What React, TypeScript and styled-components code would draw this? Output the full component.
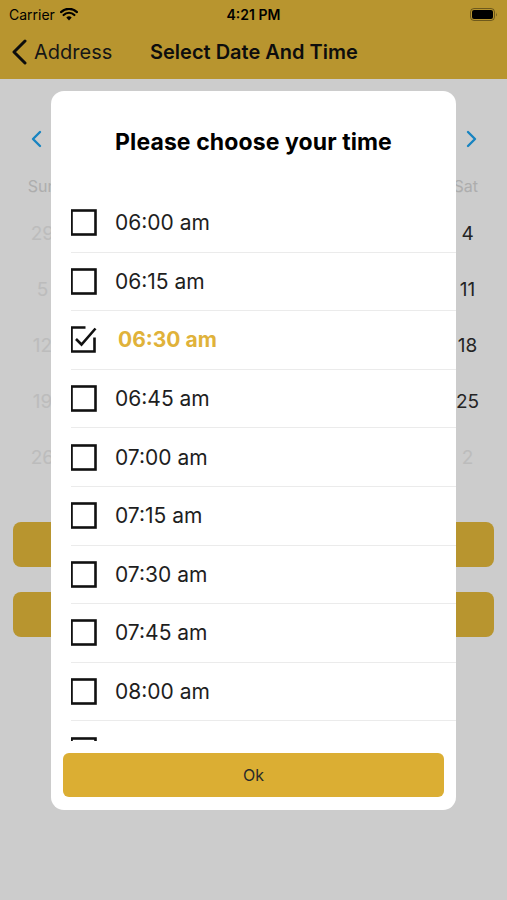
import React from 'react';
import styled, { createGlobalStyle } from 'styled-components';

const GlobalStyle = createGlobalStyle`
  html, body {
    margin: 0;
    padding: 0;
    background: #ffffff;
    font-family: Inter, 'Noto Sans', sans-serif;
  }
  * {
    box-sizing: border-box;
  }
`;

const gold = '#e6bb3b';

const times = [
  '06:00 am',
  '06:15 am',
  '06:30 am',
  '06:45 am',
  '07:00 am',
  '07:15 am',
  '07:30 am',
  '07:45 am',
  '08:00 am',
  '08:15 am',
];

const weekDays = ['Sun', 'Mon', 'Tue', 'Wed', 'Thu', 'Fri', 'Sat'];

const weeks = [
  [29, 30, 31, 1, 2, 3, 4],
  [5, 6, 7, 8, 9, 10, 11],
  [12, 13, 14, 15, 16, 17, 18],
  [19, 20, 21, 22, 23, 24, 25],
  [26, 27, 28, 29, 30, 1, 2],
];

const isFaded = (week: number, col: number) =>
  col === 0 || (week === 0 && col < 3) || (week === 4 && col > 4);

export default function App() {
  return (
    <>
      <GlobalStyle />
      <Screen>
        <TopBar>
          <StatusBar>
            <Carrier>
              Carrier
              <svg width="18" height="13" viewBox="0 0 18 13">
                <path d="M9 12.5 L6.3 9.6 A3.9 3.9 0 0 1 11.7 9.6 Z" fill="#000" />
                <path
                  d="M3.6 7 A7.6 7.6 0 0 1 14.4 7"
                  stroke="#000"
                  strokeWidth="2.2"
                  fill="none"
                  strokeLinecap="round"
                />
                <path
                  d="M1 4.1 A11.4 11.4 0 0 1 17 4.1"
                  stroke="#000"
                  strokeWidth="2.2"
                  fill="none"
                  strokeLinecap="round"
                />
              </svg>
            </Carrier>
            <Clock>4:21 PM</Clock>
            <Battery>
              <svg width="28" height="13" viewBox="0 0 28 13">
                <rect x="0.5" y="0.5" width="24" height="12" rx="3.5" fill="none" stroke="#000" strokeOpacity="0.4" />
                <rect x="2" y="2" width="21" height="9" rx="2" fill="#000" />
                <path d="M26 4.5 Q27.5 6.5 26 8.5 Z" fill="#000" fillOpacity="0.4" />
              </svg>
            </Battery>
          </StatusBar>
          <NavBar>
            <BackButton>
              <svg width="16" height="26" viewBox="0 0 16 26">
                <path d="M14 2 L3 13 L14 24" stroke="#111" strokeWidth="3" fill="none" strokeLinecap="round" strokeLinejoin="round" />
              </svg>
              Address
            </BackButton>
            <NavTitle>Select Date And Time</NavTitle>
          </NavBar>
        </TopBar>

        <Calendar>
          <MonthRow>
            <Arrow>
              <svg width="12" height="18" viewBox="0 0 12 18">
                <path d="M10 2 L3 9 L10 16" stroke="#1fa6f2" strokeWidth="2.4" fill="none" strokeLinecap="round" strokeLinejoin="round" />
              </svg>
            </Arrow>
            <MonthLabel>April 2020</MonthLabel>
            <Arrow>
              <svg width="12" height="18" viewBox="0 0 12 18">
                <path d="M2 2 L9 9 L2 16" stroke="#1fa6f2" strokeWidth="2.4" fill="none" strokeLinecap="round" strokeLinejoin="round" />
              </svg>
            </Arrow>
          </MonthRow>
          <WeekHeader>
            {weekDays.map((d) => (
              <WeekDay key={d}>{d}</WeekDay>
            ))}
          </WeekHeader>
          <DaysGrid>
            {weeks.map((week, w) =>
              week.map((day, c) => (
                <Day key={`${w}-${c}`} $faded={isFaded(w, c)}>
                  {day}
                </Day>
              ))
            )}
          </DaysGrid>
          <Actions>
            <ActionButton>Select Time</ActionButton>
            <ActionButton>Continue</ActionButton>
          </Actions>
        </Calendar>

        <Overlay>
          <Dialog>
            <DialogTitle>Please choose your time</DialogTitle>
            <TimeList>
              {times.map((t) => {
                const checked = t === '06:30 am';
                return (
                  <TimeRow key={t}>
                    <CheckBox checked={checked} />
                    <TimeLabel $checked={checked}>{t}</TimeLabel>
                  </TimeRow>
                );
              })}
            </TimeList>
            <OkButton>Ok</OkButton>
          </Dialog>
        </Overlay>
      </Screen>
    </>
  );
}

const CheckBox = ({ checked }: { checked: boolean }) => (
  <BoxIcon width="27" height="27" viewBox="0 0 27 27">
    {checked ? (
      <>
        <path d="M15.5 1.5 H1.5 V25.5 H24.5 V11.5" stroke="#111" strokeWidth="2.6" fill="none" />
        <path d="M6 13 L11.5 18.5 L25.5 2.5" stroke="#111" strokeWidth="2.6" fill="none" strokeLinejoin="miter" />
      </>
    ) : (
      <rect x="1.5" y="1.5" width="24" height="24" stroke="#111" strokeWidth="2.6" fill="none" />
    )}
  </BoxIcon>
);

const Screen = styled.div`
  position: relative;
  width: 507px;
  height: 900px;
  overflow: hidden;
  background: #ffffff;
`;

const TopBar = styled.header`
  background: ${gold};
`;

const StatusBar = styled.div`
  height: 25px;
  display: grid;
  grid-template-columns: 1fr auto 1fr;
  align-items: center;
  padding: 3px 9px 0 9px;
  font-size: 14px;
  color: #000;
`;

const Carrier = styled.span`
  display: flex;
  align-items: center;
  gap: 5px;
`;

const Clock = styled.span`
  font-weight: 600;
`;

const Battery = styled.span`
  display: flex;
  justify-content: flex-end;
`;

const NavBar = styled.nav`
  height: 54px;
  display: flex;
  align-items: center;
  padding: 0 0 0 11px;
`;

const BackButton = styled.div`
  display: flex;
  align-items: center;
  gap: 7px;
  font-size: 20px;
  color: #1c1c1c;
  width: 139px;
`;

const NavTitle = styled.div`
  font-size: 20px;
  font-weight: 600;
  color: #111;
`;

const Calendar = styled.main`
  padding-top: 45px;
`;

const MonthRow = styled.div`
  height: 30px;
  display: flex;
  align-items: center;
  justify-content: space-between;
  padding: 0 29px 0 30px;
`;

const Arrow = styled.span`
  display: flex;
  align-items: center;
`;

const MonthLabel = styled.span`
  font-size: 20px;
  color: #333;
`;

const WeekHeader = styled.div`
  margin-top: 20px;
  display: grid;
  grid-template-columns: repeat(7, 1fr);
  padding: 0 6px 0 7px;
  height: 24px;
  align-items: center;
`;

const WeekDay = styled.span`
  text-align: center;
  font-size: 16px;
  color: #d9d9d9;
`;

const DaysGrid = styled.div`
  margin-top: 7px;
  display: grid;
  grid-template-columns: repeat(7, 1fr);
  grid-auto-rows: 56px;
  align-items: center;
  padding: 0 4px 0 7px;
`;

const Day = styled.span<{ $faded: boolean }>`
  text-align: center;
  font-size: 19px;
  color: ${(p) => (p.$faded ? '#ececec' : '#2e2e2e')};
`;

const Actions = styled.div`
  margin-top: 37px;
  padding: 0 13px;
  display: flex;
  flex-direction: column;
  gap: 25px;
`;

const ActionButton = styled.div`
  height: 45px;
  border-radius: 8px;
  background: ${gold};
  display: flex;
  align-items: center;
  justify-content: center;
  font-size: 17px;
  color: #222;
`;

const Overlay = styled.div`
  position: absolute;
  inset: 0;
  background: rgba(0, 0, 0, 0.2);
  display: flex;
  justify-content: center;
  align-items: flex-start;
  padding-top: 91px;
`;

const Dialog = styled.section`
  width: 405px;
  height: 719px;
  background: #ffffff;
  border-radius: 13px;
  display: flex;
  flex-direction: column;
  padding: 37px 0 13px 0;
`;

const DialogTitle = styled.h2`
  margin: 0 0 38px 0;
  text-align: center;
  font-size: 23px;
  line-height: 28px;
  font-weight: 700;
  color: #000;
  letter-spacing: 0.1px;
`;

const TimeList = styled.ul`
  list-style: none;
  margin: 0 0 0 20px;
  padding: 0;
  height: 547px;
  overflow: hidden;
`;

const TimeRow = styled.li`
  height: 58.6px;
  display: flex;
  align-items: center;
  gap: 18px;
  border-bottom: 1px solid #ebebeb;
`;

const BoxIcon = styled.svg`
  flex: none;
  margin-left: -1px;
`;

const TimeLabel = styled.span<{ $checked: boolean }>`
  font-size: 21px;
  color: ${(p) => (p.$checked ? '#e0b23a' : '#1e1e1e')};
  font-weight: ${(p) => (p.$checked ? 700 : 400)};
  margin-left: ${(p) => (p.$checked ? '3px' : '0')};
`;

const OkButton = styled.button`
  margin: 12px 12px 0 12px;
  height: 44px;
  border: none;
  border-radius: 6px;
  background: #dbae33;
  font-family: Inter, 'Noto Sans', sans-serif;
  font-size: 16px;
  color: #2a2a2a;
`;
